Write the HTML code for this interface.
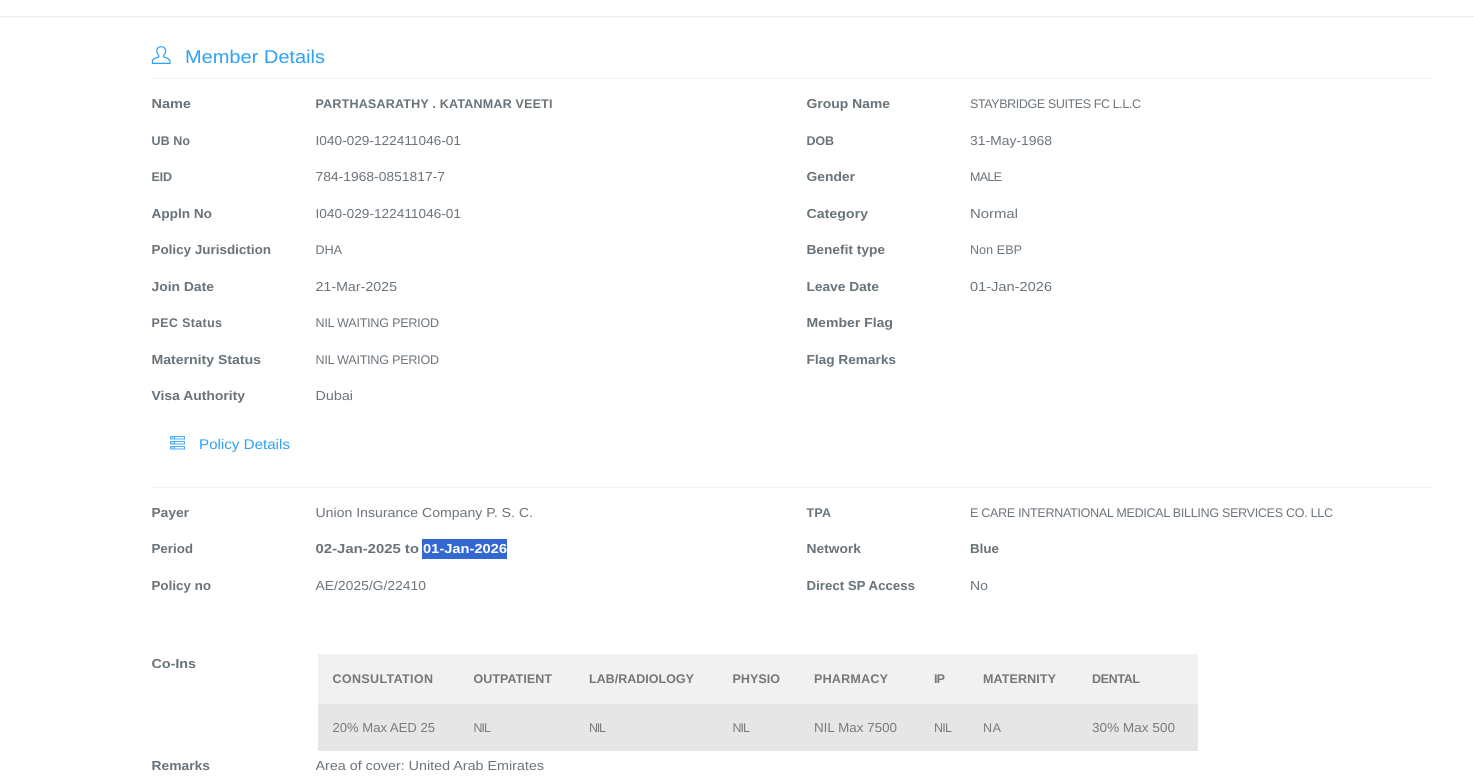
<!DOCTYPE html>
<html><head><meta charset="utf-8"><title>Member Details</title>
<style>
html,body{margin:0;padding:0;width:1474px;height:782px;overflow:hidden;background:#fff}
svg{display:block}
text{font-family:"Liberation Sans",sans-serif;font-size:13px;fill:#6c757d;text-rendering:geometricPrecision}
.b{font-weight:700;fill:#69737a}
.h{font-weight:700;fill:#767676}
.t{fill:#7b7b7b}
.u{font-size:12.500px}
</style></head><body>
<svg width="1474" height="782" viewBox="0 0 1474 782" xmlns="http://www.w3.org/2000/svg">
<defs><clipPath id="c"><rect x="0" y="0" width="1474" height="771"/></clipPath></defs>
<rect x="0" y="16" width="1474" height="1" fill="#ebedee"/>
<rect x="0" y="17" width="1474" height="1" fill="#f8f8f9"/>
<rect x="152" y="78" width="1280" height="1" fill="#f1f2f3"/>
<rect x="152" y="487" width="1280" height="1" fill="#f1f2f3"/>

<g fill="none" stroke="#2ea1f8" stroke-width="1.2">
<path d="M152.400 63.400v-1.600c0-2 1.400-3.200 3.400-3.800l2.600-.9c.6-.3.7-1.100.3-1.700-1.200-1.300-2-2.600-2-4.400 0-2.600 2-4.300 4.500-4.300s4.500 1.700 4.500 4.300c0 1.800-.8 3.100-2 4.400-.4.600-.3 1.400.3 1.700l2.600.9c2 .6 3.400 1.800 3.400 3.800v1.600z"/>
</g>
<text x="185" y="63" textLength="140" lengthAdjust="spacingAndGlyphs" style="font-size:18.500px;fill:#2ea1f8">Member Details</text>

<g fill="#bfe0fb" stroke="#4fadf8" stroke-width="1">
<rect x="170.500" y="436.500" width="14" height="2.500" fill="#fff"/><rect x="170.500" y="441.500" width="14" height="2.500" fill="#fff"/><rect x="170.500" y="446.500" width="14" height="2.500" fill="#fff"/>
<rect x="170.500" y="436.500" width="4" height="2.500"/><rect x="170.500" y="441.500" width="4" height="2.500"/><rect x="170.500" y="446.500" width="4" height="2.500"/>
</g>
<text x="199" y="449" textLength="91" lengthAdjust="spacingAndGlyphs" style="font-size:14px;fill:#2ea1f8">Policy Details</text>

<g>
<text class="b" x="151.500" y="108" textLength="39.500" lengthAdjust="spacingAndGlyphs">Name</text>
<text class="b u" x="315.500" y="108" textLength="237" lengthAdjust="spacing">PARTHASARATHY . KATANMAR VEETI</text>
<text class="b u" x="151.500" y="145" textLength="38.500" lengthAdjust="spacing">UB No</text>
<text x="315.500" y="145" textLength="145.500" lengthAdjust="spacingAndGlyphs">I040-029-122411046-01</text>
<text class="b u" x="151.500" y="181" textLength="20.500" lengthAdjust="spacing">EID</text>
<text x="315.500" y="181" textLength="129.500" lengthAdjust="spacingAndGlyphs">784-1968-0851817-7</text>
<text class="b" x="151.500" y="218" textLength="60.500" lengthAdjust="spacingAndGlyphs">Appln No</text>
<text x="315.500" y="218" textLength="145.500" lengthAdjust="spacingAndGlyphs">I040-029-122411046-01</text>
<text class="b" x="151.500" y="254" textLength="119.500" lengthAdjust="spacingAndGlyphs">Policy Jurisdiction</text>
<text class="u" x="315.500" y="254" textLength="26.500" lengthAdjust="spacing">DHA</text>
<text class="b" x="151.500" y="291" textLength="62.500" lengthAdjust="spacingAndGlyphs">Join Date</text>
<text x="315.500" y="291" textLength="81.500" lengthAdjust="spacingAndGlyphs">21-Mar-2025</text>
<text class="b u" x="151.500" y="327" textLength="70.500" lengthAdjust="spacing">PEC Status</text>
<text class="u" x="315.500" y="327" textLength="123.500" lengthAdjust="spacing">NIL WAITING PERIOD</text>
<text class="b" x="151.500" y="364" textLength="109.500" lengthAdjust="spacingAndGlyphs">Maternity Status</text>
<text class="u" x="315.500" y="364" textLength="123.500" lengthAdjust="spacing">NIL WAITING PERIOD</text>
<text class="b" x="151.500" y="400" textLength="93.500" lengthAdjust="spacingAndGlyphs">Visa Authority</text>
<text x="315.500" y="400" textLength="37.500" lengthAdjust="spacingAndGlyphs">Dubai</text>

<text class="b" x="806.500" y="108" textLength="83.500" lengthAdjust="spacingAndGlyphs">Group Name</text>
<text class="u" x="970" y="108" textLength="171" lengthAdjust="spacing">STAYBRIDGE SUITES FC L.L.C</text>
<text class="b u" x="806.500" y="145" textLength="27.500" lengthAdjust="spacing">DOB</text>
<text x="970" y="145" textLength="82" lengthAdjust="spacingAndGlyphs">31-May-1968</text>
<text class="b" x="806.500" y="181" textLength="48.500" lengthAdjust="spacingAndGlyphs">Gender</text>
<text class="u" x="970" y="181" textLength="32" lengthAdjust="spacing">MALE</text>
<text class="b" x="806.500" y="218" textLength="61.500" lengthAdjust="spacingAndGlyphs">Category</text>
<text x="970" y="218" textLength="48" lengthAdjust="spacingAndGlyphs">Normal</text>
<text class="b" x="806.500" y="254" textLength="78.500" lengthAdjust="spacingAndGlyphs">Benefit type</text>
<text class="u" x="970" y="254" textLength="52" lengthAdjust="spacing">Non EBP</text>
<text class="b" x="806.500" y="291" textLength="72.500" lengthAdjust="spacingAndGlyphs">Leave Date</text>
<text x="970" y="291" textLength="82" lengthAdjust="spacingAndGlyphs">01-Jan-2026</text>
<text class="b" x="806.500" y="327" textLength="86.500" lengthAdjust="spacingAndGlyphs">Member Flag</text>
<text class="b" x="806.500" y="364" textLength="89.500" lengthAdjust="spacingAndGlyphs">Flag Remarks</text>

<text class="b" x="151.500" y="517" textLength="37.500" lengthAdjust="spacingAndGlyphs">Payer</text>
<text x="315.500" y="517" textLength="217.500" lengthAdjust="spacingAndGlyphs">Union Insurance Company P. S. C.</text>
<text class="b" x="151.500" y="553" textLength="41.500" lengthAdjust="spacingAndGlyphs">Period</text>
<text class="b" x="315.500" y="553" textLength="103.500" lengthAdjust="spacingAndGlyphs">02-Jan-2025 to</text>
<rect x="422" y="539" width="85" height="20" fill="#3367d1"/>
<text class="b" x="423" y="553" textLength="84" lengthAdjust="spacingAndGlyphs" style="fill:#fff">01-Jan-2026</text>
<text class="b" x="151.500" y="590" textLength="59.500" lengthAdjust="spacingAndGlyphs">Policy no</text>
<text x="315.500" y="590" textLength="110.500" lengthAdjust="spacingAndGlyphs">AE/2025/G/22410</text>

<text class="b u" x="806.500" y="517" textLength="24.500" lengthAdjust="spacing">TPA</text>
<text class="u" x="970" y="517" textLength="363" lengthAdjust="spacing">E CARE INTERNATIONAL MEDICAL BILLING SERVICES CO. LLC</text>
<text class="b" x="806.500" y="553" textLength="54.500" lengthAdjust="spacingAndGlyphs">Network</text>
<text class="b" x="970" y="553" textLength="29" lengthAdjust="spacingAndGlyphs">Blue</text>
<text class="b" x="806.500" y="590" textLength="108.500" lengthAdjust="spacingAndGlyphs">Direct SP Access</text>
<text x="970" y="590" textLength="18" lengthAdjust="spacingAndGlyphs">No</text>

<text class="b" x="151.500" y="668" textLength="44.500" lengthAdjust="spacingAndGlyphs">Co-Ins</text>
</g>

<rect x="318" y="654" width="880" height="50" fill="#f1f1f1"/>
<rect x="318" y="704" width="880" height="47" fill="#e6e6e6"/>
<text class="h u" x="332.500" y="683" textLength="100.500" lengthAdjust="spacing">CONSULTATION</text>
<text class="h u" x="473.500" y="683" textLength="78.500" lengthAdjust="spacing">OUTPATIENT</text>
<text class="h u" x="589" y="683" textLength="105" lengthAdjust="spacing">LAB/RADIOLOGY</text>
<text class="h u" x="732.500" y="683" textLength="47.500" lengthAdjust="spacing">PHYSIO</text>
<text class="h u" x="814" y="683" textLength="74" lengthAdjust="spacing">PHARMACY</text>
<text class="h u" x="934" y="683" textLength="11" lengthAdjust="spacing">IP</text>
<text class="h u" x="983" y="683" textLength="73" lengthAdjust="spacing">MATERNITY</text>
<text class="h u" x="1092" y="683" textLength="48" lengthAdjust="spacing">DENTAL</text>

<text class="t" x="332.500" y="732" textLength="102.500" lengthAdjust="spacingAndGlyphs">20% Max AED 25</text>
<text class="t u" x="473.500" y="732" textLength="17.500" lengthAdjust="spacing">NIL</text>
<text class="t u" x="589" y="732" textLength="17" lengthAdjust="spacing">NIL</text>
<text class="t u" x="732.500" y="732" textLength="17.500" lengthAdjust="spacing">NIL</text>
<text class="t" x="814" y="732" textLength="83" lengthAdjust="spacingAndGlyphs">NIL Max 7500</text>
<text class="t u" x="934" y="732" textLength="18" lengthAdjust="spacing">NIL</text>
<text class="t u" x="983" y="732" textLength="18" lengthAdjust="spacing">NA</text>
<text class="t" x="1092" y="732" textLength="83" lengthAdjust="spacingAndGlyphs">30% Max 500</text>

<g clip-path="url(#c)">
<text class="b" x="151.500" y="770" textLength="58.500" lengthAdjust="spacingAndGlyphs">Remarks</text>
<text x="315.500" y="770" textLength="228.500" lengthAdjust="spacingAndGlyphs">Area of cover: United Arab Emirates</text>
</g>
</svg>
</body></html>
